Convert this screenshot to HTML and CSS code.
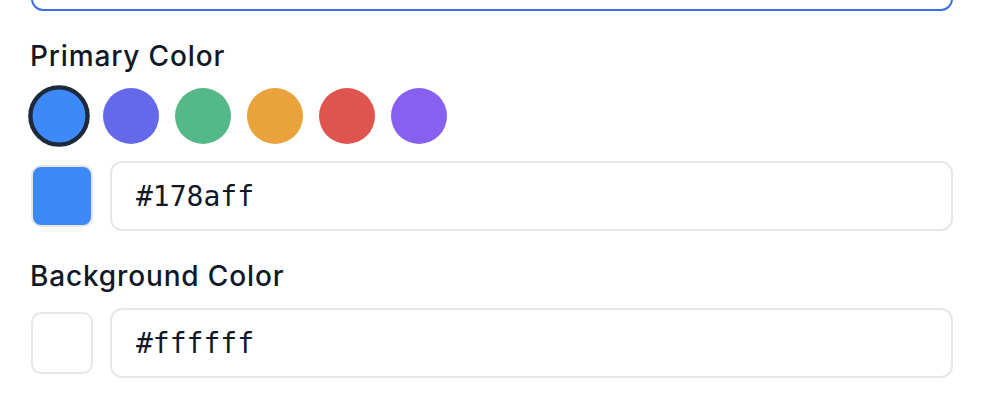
FILE: index.html
```html
<!DOCTYPE html>
<html lang="en">
<head>
    <meta charset="UTF-8">
    <meta name="viewport" content="width=device-width, initial-scale=1.0">
    <title>Theme Colors</title>
    <link rel="stylesheet" href="styles.css">
</head>
<body>
    <div class="panel">
        <input class="text-input focused" type="text" value="">

        <div class="field">
            <label class="field-label">Primary Color</label>
            <div class="presets">
                <button class="dot selected" style="background:#3e89f8"></button>
                <button class="dot" style="background:#6469e9"></button>
                <button class="dot" style="background:#54b888"></button>
                <button class="dot" style="background:#e9a23c"></button>
                <button class="dot" style="background:#df544f"></button>
                <button class="dot" style="background:#8661ef"></button>
            </div>
            <div class="color-row">
                <span class="swatch" style="background:#3e89f8"></span>
                <input class="text-input hex" type="text" value="#178aff">
            </div>
        </div>

        <div class="field">
            <label class="field-label">Background Color</label>
            <div class="color-row">
                <span class="swatch" style="background:#ffffff"></span>
                <input class="text-input hex" type="text" value="#ffffff">
            </div>
        </div>
    </div>
</body>
</html>
```

FILE: styles.css
```css
body {
    margin: 0;
    padding: 0;
    background: #ffffff;
    font-family: Inter, "Noto Sans", sans-serif;
    color: #111827;
    overflow: hidden;
}
.panel {
    display: flex;
    flex-direction: column;
    gap: 25px;
    padding: 0 39px 0 31px;
}
.text-input {
    box-sizing: border-box;
    width: 100%;
    height: 70px;
    border: 2px solid #e5e7eb;
    border-radius: 12px;
    padding: 0 24px;
    background: #fff;
    outline: none;
}
.text-input.focused {
    margin-top: -59px;
    border-color: #3a6ee6;
}
.field {
    display: flex;
    flex-direction: column;
}
.field-label {
    display: block;
    font-size: 28px;
    font-weight: 500;
    letter-spacing: 0.85px;
    line-height: 40px;
    margin-bottom: 12px;
    margin-left: -1px;
    color: #111827;
}
.presets {
    display: flex;
    gap: 16px;
    height: 56px;
    margin-bottom: 17px;
}
.dot {
    width: 56px;
    height: 56px;
    padding: 0;
    border-radius: 50%;
    border: 4px solid transparent;
    cursor: pointer;
}
.dot.selected {
    border-color: #1e293b;
    transform: scale(1.1);
}
.color-row {
    display: flex;
    align-items: center;
    gap: 17px;
}
.swatch {
    flex: none;
    box-sizing: border-box;
    width: 62px;
    height: 62px;
    border: 2px solid #e5e7eb;
    border-radius: 10px;
}
.hex {
    flex: 1;
    font-family: "DejaVu Sans Mono", monospace;
    font-size: 28px;
    color: #111827;
}
```
